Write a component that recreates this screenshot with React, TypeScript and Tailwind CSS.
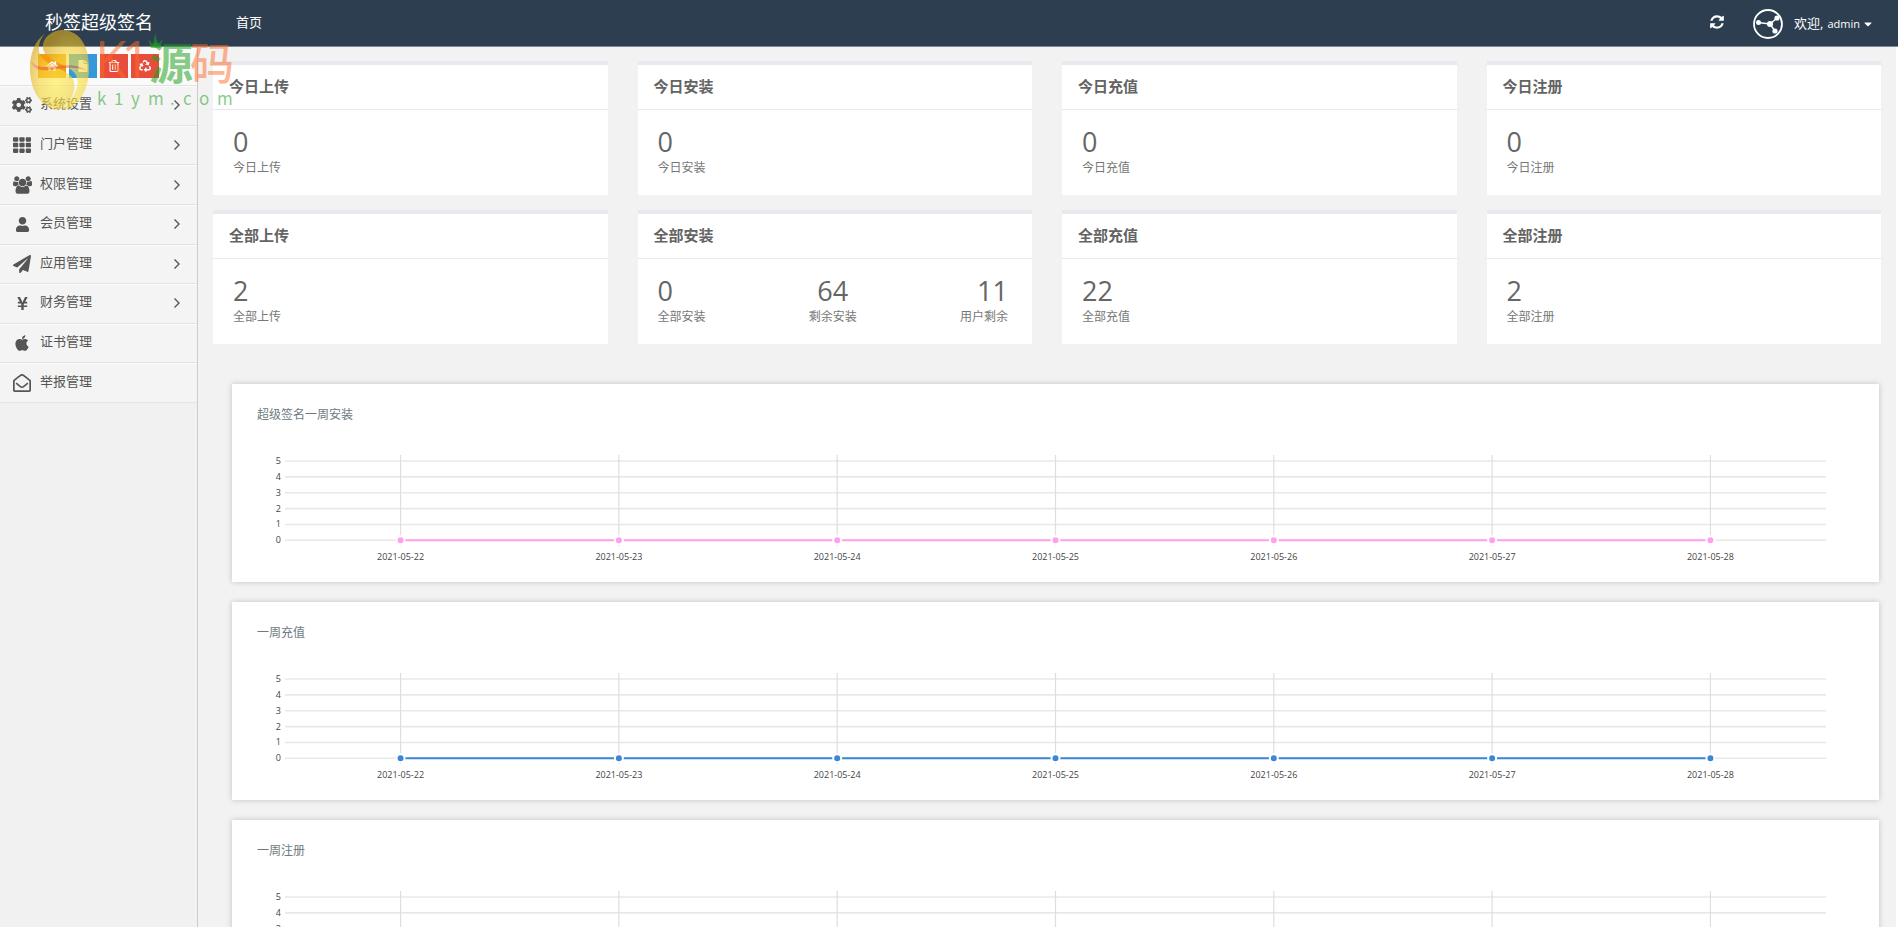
import type { ReactNode } from 'react';
import {
  FaApple,
  FaCaretDown,
  FaCogs,
  FaFile,
  FaHome,
  FaPaperPlane,
  FaRecycle,
  FaRegEnvelopeOpen,
  FaRegTrashAlt,
  FaTh,
  FaUser,
  FaYenSign,
} from 'react-icons/fa';

const UsersIcon = () => (
  <svg viewBox="0 0 1920 1792" className="h-[18px] w-[19px]" fill="currentColor" aria-hidden="true">
    <path d="M593 896q-162 5-265 128h-134q-82 0-138-40.5t-56-118.5q0-353 124-353 6 0 43.5 21t97.5 42.5 119 21.5q67 0 133-23-5 37-5 66 0 159 90 294zm1071 637q0 120-73 189.5t-194 69.5h-874q-121 0-194-69.5t-73-189.5q0-53 3.5-103.5t14-109 26.5-108.5 43-97.5 62-81 85.5-53.5 111.5-20q10 0 43 21.5t73 48 107 48 135 21.5 135-21.5 107-48 73-48 43-21.5q61 0 111.5 20t85.5 53.5 62 81 43 97.5 26.5 108.5 14 109 3.5 103.5zm-1024-1277q0 106-75 181t-181 75-181-75-75-181 75-181 181-75 181 75 75 181zm704 384q0 159-112.5 271.5t-271.5 112.5-271.5-112.5-112.5-271.5 112.5-271.5 271.5-112.5 271.5 112.5 112.5 271.5zm576 225q0 78-56 118.5t-138 40.5h-134q-103-123-265-128 90-135 90-294 0-29-5-66 66 23 133 23 59 0 119-21.5t97.5-42.5 43.5-21q124 0 124 353zm-128-609q0 106-75 181t-181 75-181-75-75-181 75-181 181-75 181 75 75 181z" />
  </svg>
);

const RefreshIcon = () => (
  <svg viewBox="0 0 1792 1792" className="size-4" fill="currentColor" aria-hidden="true">
    <path d="M1639 1056q0 5-1 7-64 268-268 434.5t-478 166.5q-146 0-282.5-55t-243.5-157l-129 129q-19 19-45 19t-45-19-19-45v-448q0-26 19-45t45-19h448q26 0 45 19t19 45-19 45l-137 137q71 66 161 102t187 36q134 0 250-65t186-179q11-17 53-117 8-23 30-23h192q13 0 22.5 9.5t9.5 22.5zm25-800v448q0 26-19 45t-45 19h-448q-26 0-45-19t-19-45 19-45l138-138q-148-137-349-137-134 0-250 65t-186 179q-11 17-53 117-8 23-30 23h-199q-13 0-22.5-9.5t-9.5-22.5v-7q65-268 270-434.5t480-166.5q146 0 284 55.5t245 156.5l130-129q19-19 45-19t45 19 19 45z" />
  </svg>
);

const Avatar = () => (
  <svg viewBox="0 0 30 30" className="size-[30px]" stroke="white" aria-hidden="true">
    <circle cx="15" cy="15" r="14" fill="none" strokeWidth="1.8" />
    <path d="M5 13.5L17 15L24 9M17 15L22 22" fill="none" strokeWidth="1.4" />
    <g fill="white" stroke="none">
      <circle cx="5.5" cy="13.5" r="2.5" />
      <circle cx="17" cy="15" r="3" />
      <circle cx="24" cy="9" r="2.6" />
      <circle cx="22" cy="22" r="2.6" />
    </g>
  </svg>
);

const shortcuts = [
  { label: '首页', icon: <FaHome />, color: 'bg-[#f39c12]' },
  { label: '文章', icon: <FaFile />, color: 'bg-[#3498db]' },
  { label: '回收站', icon: <FaRegTrashAlt />, color: 'bg-[#e74c3c]' },
  { label: '清除缓存', icon: <FaRecycle />, color: 'bg-[#e74c3c]' },
];

const menu: { name: string; icon: ReactNode; sub: boolean }[] = [
  { name: '系统设置', icon: <FaCogs className="size-5" />, sub: true },
  { name: '门户管理', icon: <FaTh className="size-[18px]" />, sub: true },
  { name: '权限管理', icon: <UsersIcon />, sub: true },
  { name: '会员管理', icon: <FaUser className="size-[15px]" />, sub: true },
  { name: '应用管理', icon: <FaPaperPlane className="size-[18px]" />, sub: true },
  { name: '财务管理', icon: <FaYenSign className="size-[15px]" />, sub: true },
  { name: '证书管理', icon: <FaApple className="size-[18px]" />, sub: false },
  { name: '举报管理', icon: <FaRegEnvelopeOpen className="size-[18px]" />, sub: false },
];

const cards = [
  { title: '今日上传', items: [{ value: 0, label: '今日上传' }] },
  { title: '今日安装', items: [{ value: 0, label: '今日安装' }] },
  { title: '今日充值', items: [{ value: 0, label: '今日充值' }] },
  { title: '今日注册', items: [{ value: 0, label: '今日注册' }] },
  { title: '全部上传', items: [{ value: 2, label: '全部上传' }] },
  {
    title: '全部安装',
    items: [
      { value: 0, label: '全部安装' },
      { value: 64, label: '剩余安装' },
      { value: 11, label: '用户剩余' },
    ],
  },
  { title: '全部充值', items: [{ value: 22, label: '全部充值' }] },
  { title: '全部注册', items: [{ value: 2, label: '全部注册' }] },
];

const charts = [
  { title: '超级签名一周安装', color: '#ff9ff0' },
  { title: '一周充值', color: '#3a87d8' },
  { title: '一周注册', color: '#ff9ff0' },
];

const days = ['2021-05-22', '2021-05-23', '2021-05-24', '2021-05-25', '2021-05-26', '2021-05-27', '2021-05-28'];

// x of a day on the chart, in percent of the plot width
const dayX = (i: number) => 7.5 + (i * 85) / 6;
// y of a value, in pixels from the top of the plot
const valueY = (v: number) => 86.3 - v * 15.86;

function WeekChart({ title, color }: { title: string; color: string }) {
  return (
    <section className="h-[198px] bg-white pl-[25px] pr-[53px] pt-[21px] shadow-[0_0_6px_rgba(0,0,0,0.2)]">
      <h3 className="text-xs leading-5 text-[#6c7a80]">{title}</h3>
      <div className="pl-7 pt-[29px]">
        <svg className="h-[114px] w-full overflow-visible text-[9px]" role="img" aria-label={title}>
          {[0, 1, 2, 3, 4, 5].map((v) => (
            <g key={v}>
              <line x1="0" x2="100%" y1={valueY(v)} y2={valueY(v)} stroke="#e8e8e8" strokeWidth="1.6" />
              <text x="-4" y={valueY(v) + 3} textAnchor="end" fill="#444">{v}</text>
            </g>
          ))}
          {days.map((day, i) => (
            <g key={day}>
              <line x1={`${dayX(i)}%`} x2={`${dayX(i)}%`} y1="1" y2="92" stroke="#dedede" strokeWidth="1.2" />
              <text x={`${dayX(i)}%`} y="106" textAnchor="middle" fill="#444">{day}</text>
            </g>
          ))}
          <line x1={`${dayX(0)}%`} x2={`${dayX(6)}%`} y1={valueY(0)} y2={valueY(0)} stroke={color} strokeWidth="2" />
          {days.map((day, i) => (
            <circle key={day} cx={`${dayX(i)}%`} cy={valueY(0)} r="4" fill={color} stroke="#fff" strokeWidth="2" />
          ))}
        </svg>
      </div>
    </section>
  );
}

// Semi-transparent site mark lying over the top left corner
function SiteMark() {
  return (
    <svg className="pointer-events-none absolute left-0 top-0 h-[120px] w-[240px]" viewBox="0 0 240 120">
      <defs>
        <radialGradient id="ball" cx="0.6" cy="0.65" r="0.65">
          <stop offset="0" stopColor="#fff04a" />
          <stop offset="0.6" stopColor="#f7d63c" />
          <stop offset="1" stopColor="#dcaa1c" />
        </radialGradient>
      </defs>
      <g opacity="0.62">
        <path d="M61 30C82 30 89 49 89 68C89 94 75 110 62 110C74 98 81 86 76 75C70 63 40 62 43 44C45 36 52 31 61 30Z" fill="url(#ball)" />
        <path d="M45 34C35 40 30 53 30 68C30 92 42 108 59 110C71 104 77 90 73 79C67 67 36 66 39 46C40 40 42 37 45 34Z" fill="url(#ball)" />
        <path d="M30 60C38 82 62 60 88 71C66 56 43 77 30 60Z" fill="#ea4a50" fillOpacity="0.7" />
      </g>
      <g fill="#ff6a26" fillOpacity="0.5">
        <text x="95" y="78" className="font-['Open_Sans'] text-[52px]">K</text>
        <text x="121" y="78" className="font-['Open_Sans'] text-[52px]">1</text>
        <text x="190" y="80" className="font-['Noto_Sans_CJK_SC',sans-serif] text-[44px] font-medium">码</text>
      </g>
      <g fill="#1ea01e" fillOpacity="0.55">
        <text x="149" y="80" className="font-['Noto_Sans_CJK_SC',sans-serif] text-[44px] font-bold">源</text>
        <path d="M148 39L153 44L155 33L158 44L163 39L160 48H151Z" />
        <text x="97 114 131 148 170 183 199 217" y="105" className="font-['Noto_Sans_CJK_SC',sans-serif] text-[17px]">k1ym.com</text>
      </g>
    </svg>
  );
}

export default function App() {
  return (
    <div className="relative flex h-screen flex-col overflow-hidden bg-[#f2f2f2] font-['Open_Sans','Noto_Sans_CJK_SC',sans-serif] text-[#555]">
      <header className="flex h-[47px] shrink-0 items-center border-b border-[#7b8894] bg-[#2c3e50] pl-[45px] pr-6 text-white">
        <a href="#" className="w-[191px] pb-0.5 text-lg leading-6">秒签超级签名</a>
        <a href="#" className="pb-0.5 text-[13px] leading-5">首页</a>
        <button type="button" aria-label="刷新" className="ml-auto mr-7 pb-0.5">
          <RefreshIcon />
        </button>
        <button type="button" className="flex items-center pt-0.5 text-[11px]">
          <Avatar />
          <span className="ml-[11px] text-[13px]">欢迎,</span>
          <span className="ml-1">admin</span>
          <FaCaretDown className="ml-0.5 size-3" />
        </button>
      </header>

      <div className="flex min-h-0 flex-1">
        <aside className="w-[198px] shrink-0 border-r border-[#ccc] bg-[#f1f1f1]">
          <div className="flex h-[38px] items-center justify-center gap-[3px] bg-[#fafafa]">
            {shortcuts.map((s) => (
              <button
                key={s.label}
                type="button"
                aria-label={s.label}
                className={`flex h-6 w-7 items-center justify-center text-xs text-white ${s.color}`}
              >
                {s.icon}
              </button>
            ))}
          </div>
          <ul className="grid h-[318px] auto-rows-fr border-b border-[#e5e5e5]">
            {menu.map((item) => (
              <li key={item.name} className="border-t border-[#e3e3e3] bg-[#f4f4f4]">
                <a href="#" className="flex h-full items-center border-t border-[#fbfbfb] pb-px pl-3 pr-4">
                  <span className="flex w-5 justify-center">{item.icon}</span>
                  <span className="ml-2 pb-1 text-[13px] leading-5">{item.name}</span>
                  {item.sub && (
                    <svg viewBox="0 0 8 12" className="ml-auto h-3 w-2" fill="none" stroke="currentColor" strokeWidth="1.4" aria-hidden="true">
                      <path d="M1.5 1.5L6 6L1.5 10.5" />
                    </svg>
                  )}
                </a>
              </li>
            ))}
          </ul>
        </aside>

        <main className="min-w-0 flex-1 overflow-hidden border-r-2 border-white pl-[15px] pr-[15px] pt-[14px]">
          <div className="grid grid-cols-4 gap-x-[30px] gap-y-[15px]">
            {cards.map((card) => (
              <section key={card.title} className="border-t-4 border-[#e6e9ed] bg-white">
                <h2 className="border-b border-[#e6e9ed] px-4 pb-3 pt-2.5 text-[15px] leading-[22px] font-bold text-[#636363]">{card.title}</h2>
                <div className="flex h-[85px] justify-between pl-5 pr-6 pt-4">
                  {card.items.map((item) => (
                    <div
                      key={item.label}
                      className="text-left [&:nth-child(2)]:text-center [&:nth-child(3)]:text-right"
                    >
                      <div className="text-[27px] leading-8 text-[#666]">{item.value}</div>
                      <div className="text-xs leading-5 text-[#777]">{item.label}</div>
                    </div>
                  ))}
                </div>
              </section>
            ))}
          </div>
          <div className="mt-10 flex flex-col gap-5 pl-[19px] pr-0.5">
            {charts.map((chart) => (
              <WeekChart key={chart.title} title={chart.title} color={chart.color} />
            ))}
          </div>
        </main>
      </div>

      <SiteMark />
    </div>
  );
}
